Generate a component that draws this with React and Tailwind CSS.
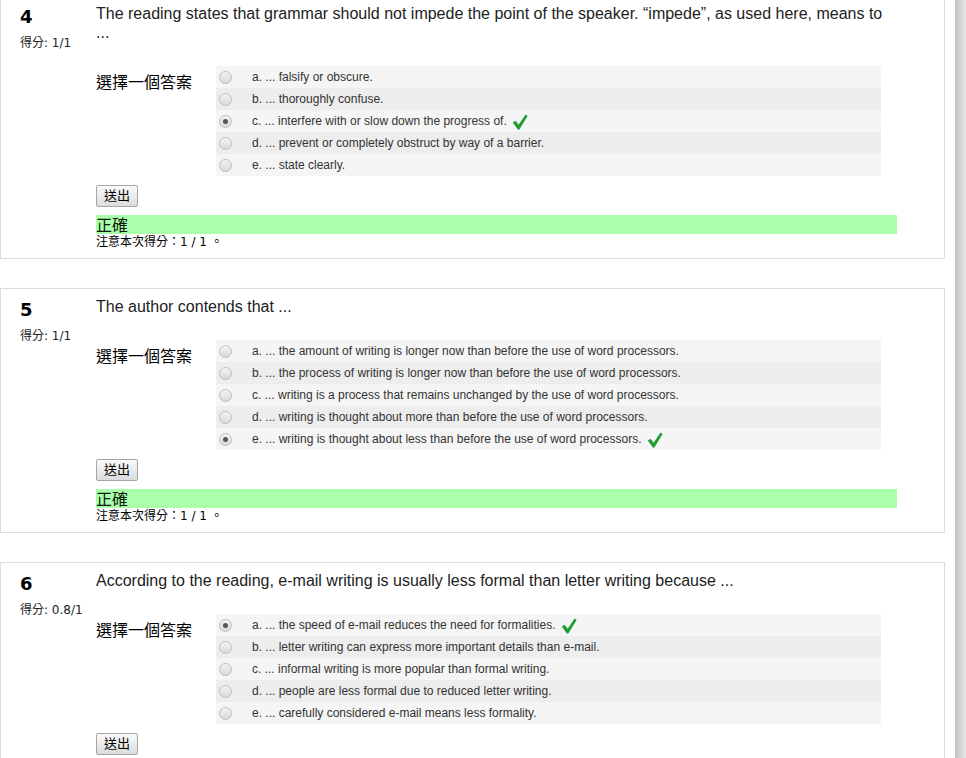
const questions = [
  {
    no: 4,
    score: "1/1",
    text: "The reading states that grammar should not impede the point of the speaker. \u201cimpede\u201d, as used here, means to ...",
    first: true,
    options: [
      "a. ... falsify or obscure.",
      "b. ... thoroughly confuse.",
      "c. ... interfere with or slow down the progress of.",
      "d. ... prevent or completely obstruct by way of a barrier.",
      "e. ... state clearly.",
    ],
    picked: 2,
  },
  {
    no: 5,
    score: "1/1",
    text: "The author contends that ...",
    options: [
      "a. ... the amount of writing is longer now than before the use of word processors.",
      "b. ... the process of writing is longer now than before the use of word processors.",
      "c. ... writing is a process that remains unchanged by the use of word processors.",
      "d. ... writing is thought about more than before the use of word processors.",
      "e. ... writing is thought about less than before the use of word processors.",
    ],
    picked: 4,
  },
  {
    no: 6,
    score: "0.8/1",
    text: "According to the reading, e-mail writing is usually less formal than letter writing because ...",
    options: [
      "a. ... the speed of e-mail reduces the need for formalities.",
      "b. ... letter writing can express more important details than e-mail.",
      "c. ... informal writing is more popular than formal writing.",
      "d. ... people are less formal due to reduced letter writing.",
      "e. ... carefully considered e-mail means less formality.",
    ],
    picked: 0,
  },
];

const cjk = "font-['Liberation_Sans','Noto_Sans_CJK_TC',sans-serif]";
const cjkWide = "font-['DejaVu_Sans','Noto_Sans_CJK_TC',sans-serif]";

const Check = () => (
  <svg width="16" height="16" viewBox="0 0 16 16" className="ml-[5px] mt-[2px] inline-block shrink-0">
    <path d="M0.8 8.6 L3.6 6.8 L6.6 10.8 L13.6 0.6 L15.6 2 L7.4 15.4 L5.8 15.4 Z" fill="#1f9e34" />
  </svg>
);

const Radio = ({ checked }) => (
  <span className="flex h-[13px] w-[13px] shrink-0 items-center justify-center rounded-full border border-[#bdbdbd] bg-gradient-to-b from-[#f4f4f4] to-[#d9d9d9]">
    {checked && <span className="h-[5px] w-[5px] rounded-full bg-[#555]" />}
  </span>
);

const Card = ({ q }) => (
  <div className={`flex border border-[#dcdcdc] bg-white ${q.first ? "-mt-[5px]" : ""} mb-[29px]`}>
    <div className="w-[95px] shrink-0 pl-[19px] pt-[10px]">
      <div className="text-[18px] font-bold leading-[22px] text-black font-['DejaVu_Sans',sans-serif]">{q.no}</div>
      <div className={`mt-[7px] text-[12px] leading-[16px] text-[#222] ${cjkWide}`}>得分: {q.score}</div>
    </div>
    <div className="w-[801px] pt-[8px] pb-[8px]">
      <div className="text-[16px] leading-[19px] text-[#222] font-['Liberation_Sans',sans-serif]">{q.text}</div>
      <div className="mt-[24px] flex">
        <div className={`w-[120px] pt-[6px] text-[16px] leading-[22px] text-black ${cjk}`}>選擇一個答案</div>
        <div className="w-[665px]">
          {q.options.map((o, i) => (
            <div
              key={i}
              className={`flex h-[22px] items-center pl-[3px] ${i % 2 ? "bg-[#ededed]" : "bg-[#f5f5f5]"}`}
            >
              <Radio checked={i === q.picked} />
              <span className="ml-[20px] text-[12px] text-[#333] font-['Liberation_Sans',sans-serif]">{o}</span>
              {i === q.picked && <Check />}
            </div>
          ))}
        </div>
      </div>
      <button className={`mt-[9px] h-[22px] rounded-[2px] border border-[#a6a6a6] bg-gradient-to-b from-[#fafafa] to-[#dcdcdc] px-[7px] text-[13px] leading-[18px] text-black ${cjk}`}>
        送出
      </button>
      <div className={`mt-[8px] h-[19px] bg-[#aaffaa] pt-[1px] text-[16px] leading-[19px] text-[#0a1a0a] ${cjk}`}>正確</div>
      <div className={`text-[12px] leading-[16px] text-black ${cjkWide}`}>注意本次得分：1 / 1 。</div>
    </div>
  </div>
);

export default function App() {
  return (
    <div className="flex h-[758px] w-[966px] overflow-hidden bg-white">
      <div className="w-[945px] shrink-0">
        {questions.map((q) => (
          <Card key={q.no} q={q} />
        ))}
      </div>
      <div className="ml-[10px] h-full w-[11px] bg-gradient-to-r from-[#c2c2c2] to-[#e6e6e6]" />
    </div>
  );
}
